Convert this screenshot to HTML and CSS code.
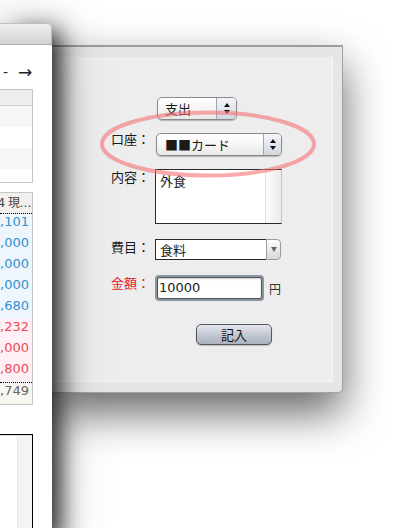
FILE: index.html
```html
<!DOCTYPE html>
<html lang="ja">
<head>
  <meta charset="UTF-8">
  <title>記入</title>
  <link rel="stylesheet" href="styles.css">
</head>
<body>
<div class="desktop">

  <div class="win-left">
    <div class="titlebar"></div>
    <div class="win-body">
      <div class="nav"><span class="dash">-</span><span class="arrow">→</span></div>

      <div class="list">
        <div class="list-head"></div>
        <div class="list-row odd"></div>
        <div class="list-row"></div>
        <div class="list-row odd"></div>
        <div class="list-row last"></div>
      </div>

      <div class="ledger">
        <div class="ledger-head"><span>4 現…</span></div>
        <div class="ledger-row in"><span>,101</span></div>
        <div class="ledger-row in"><span>,000</span></div>
        <div class="ledger-row in"><span>,000</span></div>
        <div class="ledger-row in"><span>,000</span></div>
        <div class="ledger-row in"><span>,680</span></div>
        <div class="ledger-row out"><span>,232</span></div>
        <div class="ledger-row out"><span>,000</span></div>
        <div class="ledger-row out"><span>,800</span></div>
        <div class="ledger-row total"><span>,749</span></div>
      </div>

      <div class="chart">
        <div class="chart-inner">
          <div class="chart-area"></div>
          <div class="chart-track"></div>
        </div>
      </div>
    </div>
  </div>

  <div class="sheet">
    <div class="panel">
      <div class="row row-type">
        <div class="popup popup-type">
          <span class="popup-text">支出</span>
          <span class="popup-arrows"><i class="up"></i><i class="down"></i></span>
        </div>
      </div>

      <div class="row row-account">
        <span class="label label-up">口座：</span>
        <div class="popup popup-account">
          <span class="popup-text">■■カード</span>
          <span class="popup-arrows"><i class="up"></i><i class="down"></i></span>
        </div>
      </div>

      <div class="row row-memo">
        <span class="label">内容：</span>
        <div class="memo">
          <div class="memo-text">外食</div>
          <div class="memo-track"></div>
        </div>
      </div>

      <div class="row row-item">
        <span class="label">費目：</span>
        <div class="combo">
          <div class="combo-field">食料</div>
          <div class="combo-button"><i class="down-gray"></i></div>
        </div>
      </div>

      <div class="row row-amount">
        <span class="label label-up label-red">金額：</span>
        <div class="amount">10000</div>
        <span class="unit">円</span>
      </div>

      <div class="row row-submit">
        <button class="submit">記入</button>
      </div>
    </div>
  </div>

  <svg class="mark" width="393" height="528" viewBox="0 0 393 528">
    <ellipse cx="208" cy="144" rx="106" ry="31.5" fill="none" stroke="rgba(243,114,118,0.6)" stroke-width="4"/>
  </svg>

</div>
</body>
</html>
```

FILE: styles.css
```css
body {
  margin: 0;
  background: #fff;
  font-family: "Noto Sans CJK JP", sans-serif;
  color: #1a1a1a;
}

.desktop {
  position: relative;
  width: 393px;
  height: 528px;
  overflow: hidden;
  background: #fff;
}

/* 左の窓 */
.win-left {
  position: absolute;
  left: 0;
  top: 23px;
  width: 52px;
  height: 520px;
  z-index: 2;
  border-radius: 0 5px 0 0;
  box-shadow: 12px 4px 24px -4px rgba(0, 0, 0, 0.85), 0 6px 60px rgba(0, 0, 0, 0.28);
}

.titlebar {
  height: 22px;
  box-sizing: border-box;
  background: linear-gradient(#eeeeee, #d3d3d3);
  border: 1px solid #bdbdbd;
  border-left: none;
  border-bottom-color: #a8a8a8;
  border-radius: 0 5px 0 0;
}

.win-body {
  height: 498px;
  background: #fff;
  overflow: hidden;
}

.nav {
  display: flex;
  align-items: center;
  gap: 10px;
  height: 18px;
  margin-top: 18px;
  padding-left: 3px;
  font-family: "DejaVu Sans", sans-serif;
  color: #222;
}

.dash {
  font-size: 14px;
}

.arrow {
  font-size: 17px;
}

.list {
  width: 33px;
  box-sizing: border-box;
  margin-top: 8px;
  border: 1px solid #c6c6c6;
  border-left: none;
}

.list-head {
  height: 15px;
  background: #ededed;
  border-bottom: 1px solid #cfcfcf;
}

.list-row {
  height: 21px;
  background: #fff;
}

.list-row.odd {
  background: #f6f6f6;
}

.list-row.last {
  height: 13px;
}

.ledger {
  width: 33px;
  box-sizing: border-box;
  margin-top: 9px;
  border: 1px solid #c6c6c6;
  border-left: none;
  font-family: "DejaVu Sans", "Noto Sans CJK JP", sans-serif;
  font-size: 13px;
}

.ledger-head,
.ledger-row {
  display: flex;
  justify-content: flex-end;
  padding-right: 3px;
  white-space: nowrap;
  overflow: hidden;
}

.ledger-head {
  height: 20px;
  line-height: 20px;
  padding-right: 1px;
  background: #f1f0ec;
  border-bottom: 1px dotted #000;
  color: #444;
  font-size: 12px;
  letter-spacing: -0.5px;
}

.ledger-row {
  height: 21px;
  line-height: 15px;
}

.ledger-row.in {
  background: #eef5fd;
  color: #3392cc;
}

.ledger-row.out {
  background: #fef0f4;
  color: #ec4b58;
}

.ledger-row.total {
  height: 21px;
  background: #f7f6f1;
  color: #666;
  border-top: 1px dotted #000;
}

.chart {
  width: 33px;
  height: 120px;
  box-sizing: border-box;
  margin-top: 29px;
  border-top: 1px solid #000;
  border-right: 1px solid #000;
}

.chart-inner {
  display: flex;
  height: 100%;
  border-top: 1px solid #e2e2e2;
}

.chart-area {
  width: 17px;
  background: #fff;
}

.chart-track {
  flex: 1;
  background: #f4f4f4;
  border-left: 1px solid #e6e6e6;
}

/* シート */
.sheet {
  position: absolute;
  left: 52px;
  top: 45px;
  width: 291px;
  height: 348px;
  box-sizing: border-box;
  z-index: 1;
  background: #e6e6e6;
  border: 1px solid #a2a2a2;
  border-top: 2px solid #9c9c9c;
  border-left: none;
  border-radius: 0 0 5px 0;
  padding: 10px 9px 10px 0;
  box-shadow: 0 20px 44px rgba(0, 0, 0, 0.6);
}

.panel {
  height: 100%;
  box-sizing: border-box;
  background: #ededed;
  border-right: 1px solid #f6f6f6;
  border-bottom: 1px solid #f6f6f6;
  padding: 40px 0 0 59px;
}

.row {
  display: flex;
  align-items: flex-start;
}

.row-account {
  margin-top: 13px;
}

.row-memo {
  margin-top: 13px;
}

.row-item {
  margin-top: 15px;
}

.row-amount {
  margin-top: 17px;
}

.row-submit {
  margin-top: 25px;
}

.label {
  width: 44px;
  flex: none;
  font-size: 13px;
  line-height: 16px;
  white-space: nowrap;
}

.label-up {
  margin-top: -2px;
}

.label-red {
  color: #e8202e;
}

.popup {
  display: flex;
  height: 23px;
  box-sizing: border-box;
  border: 1px solid #8a8a8a;
  border-radius: 5px;
  background: linear-gradient(#ffffff, #f6f6f6 50%, #e8e8e8);
  box-shadow: 0 1px 1px rgba(0, 0, 0, 0.25);
  overflow: hidden;
  font-size: 13px;
}

.popup-type {
  width: 80px;
  margin-left: 46px;
}

.popup-account {
  width: 126px;
  margin-left: 1px;
}

.popup-text {
  flex: 1;
  padding-left: 7px;
  line-height: 21px;
  white-space: nowrap;
}

.popup-account .popup-text {
  padding-left: 8px;
}

.popup-arrows {
  width: 19px;
  display: flex;
  flex-direction: column;
  align-items: center;
  justify-content: center;
  gap: 3px;
  border-left: 1px solid #a0a7b2;
  background: linear-gradient(#f4f6f9, #d2d8e1);
}

.popup-account .popup-arrows {
  width: 17px;
}

.up {
  border-left: 3px solid transparent;
  border-right: 3px solid transparent;
  border-bottom: 4px solid #111;
}

.down {
  border-left: 3px solid transparent;
  border-right: 3px solid transparent;
  border-top: 4px solid #111;
}

.memo {
  display: flex;
  width: 127px;
  height: 55px;
  box-sizing: border-box;
  border: 1px solid #2a2a2a;
  border-right-color: #c4c4c4;
  background: #fff;
}

.memo-text {
  flex: 1;
  padding: 2px 4px;
  font-size: 13px;
  line-height: 17px;
}

.memo-track {
  width: 15px;
  border-left: 1px solid #e2e2e2;
  background: linear-gradient(to right, #fbfbfb, #ebebeb);
}

.combo {
  display: flex;
  width: 126px;
  height: 21px;
}

.combo-field {
  flex: 1;
  box-sizing: border-box;
  border: 1px solid #2a2a2a;
  border-right: none;
  background: #fff;
  font-size: 13px;
  line-height: 19px;
  padding-left: 4px;
}

.combo-button {
  width: 15px;
  box-sizing: border-box;
  display: flex;
  align-items: center;
  justify-content: center;
  border: 1px solid #9a9a9a;
  border-radius: 0 4px 4px 0;
  background: linear-gradient(#fdfdfd, #d8d8d8);
}

.down-gray {
  border-left: 3.5px solid transparent;
  border-right: 3.5px solid transparent;
  border-top: 5px solid #666;
}

.amount {
  width: 105px;
  height: 22px;
  box-sizing: border-box;
  margin-left: 2px;
  border: 1px solid #4d5560;
  border-radius: 2px;
  background: #fff;
  box-shadow: 0 0 0 2px #8d95a1, inset 0 1px 2px rgba(0, 0, 0, 0.2);
  font-family: "DejaVu Sans", sans-serif;
  font-size: 13px;
  line-height: 20px;
  padding-left: 1px;
}

.unit {
  margin: 4px 0 0 7px;
  font-size: 12px;
  line-height: 16px;
  color: #333;
}

.submit {
  margin-left: 85px;
  width: 76px;
  height: 21px;
  padding: 0;
  border: 1px solid #50565f;
  border-radius: 5px;
  background: linear-gradient(#e4e7ec, #c3c9d2 50%, #aab2bd);
  box-shadow: 0 1px 1px rgba(0, 0, 0, 0.2);
  font-family: "Noto Sans CJK JP", sans-serif;
  font-size: 13px;
  line-height: 19px;
  color: #111;
}

.mark {
  position: absolute;
  left: 0;
  top: 0;
  z-index: 5;
  pointer-events: none;
}
```
